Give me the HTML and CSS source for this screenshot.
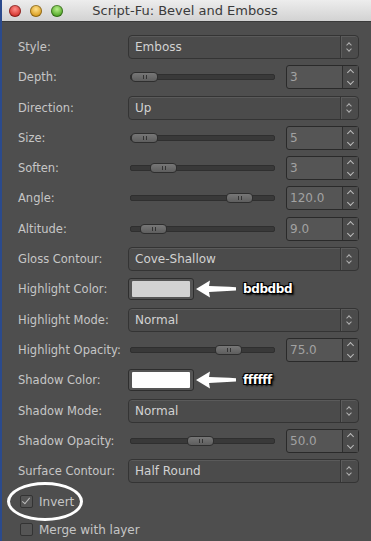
FILE: index.html
```html
<!DOCTYPE html>
<html lang="en">
<head>
    <meta charset="utf-8" />
    <meta name="viewport" content="width=device-width, initial-scale=1" />
    <title>Script-Fu: Bevel and Emboss</title>
    <link rel="stylesheet" href="styles.css">
</head>
<body>
    <div class="window">
        <div class="titlebar">
            <div class="lights">
                <span class="light red"></span>
                <span class="light yellow"></span>
                <span class="light green"></span>
            </div>
            <div class="title">Script-Fu: Bevel and Emboss</div>
        </div>

        <div class="content">
            <div class="form">
                <label>Style:</label>
                <div class="combo"><span>Emboss</span><i class="combo-arrows"></i></div>

                <label>Depth:</label>
                <div class="slider-row">
                    <div class="slider"><div class="track"></div><div class="handle" style="left: 3px"></div></div>
                    <div class="spin"><span>3</span><i class="spin-btn"></i></div>
                </div>

                <label>Direction:</label>
                <div class="combo"><span>Up</span><i class="combo-arrows"></i></div>

                <label>Size:</label>
                <div class="slider-row">
                    <div class="slider"><div class="track"></div><div class="handle" style="left: 3px"></div></div>
                    <div class="spin"><span>5</span><i class="spin-btn"></i></div>
                </div>

                <label>Soften:</label>
                <div class="slider-row">
                    <div class="slider"><div class="track"></div><div class="handle" style="left: 22px"></div></div>
                    <div class="spin"><span>3</span><i class="spin-btn"></i></div>
                </div>

                <label>Angle:</label>
                <div class="slider-row">
                    <div class="slider"><div class="track"></div><div class="handle" style="left: 98px"></div></div>
                    <div class="spin"><span>120.0</span><i class="spin-btn"></i></div>
                </div>

                <label>Altitude:</label>
                <div class="slider-row">
                    <div class="slider"><div class="track"></div><div class="handle" style="left: 12px"></div></div>
                    <div class="spin"><span>9.0</span><i class="spin-btn"></i></div>
                </div>

                <label>Gloss Contour:</label>
                <div class="combo"><span>Cove-Shallow</span><i class="combo-arrows"></i></div>

                <label>Highlight Color:</label>
                <div class="color-row">
                    <div class="swatch"><div class="swatch-fill" style="background: #d2d2d2"></div></div>
                    <svg class="pointer" width="42" height="20" viewBox="0 0 42 20">
                        <path d="M1 10 L15 1.5 L14 7 C23 7.2 32 7.4 41 8.3 L41 11.5 C32 12.2 23 12.6 14 13 L15 18.5 Z" fill="#fff"/>
                    </svg>
                    <span class="note">bdbdbd</span>
                </div>

                <label>Highlight Mode:</label>
                <div class="combo"><span>Normal</span><i class="combo-arrows"></i></div>

                <label>Highlight Opacity:</label>
                <div class="slider-row">
                    <div class="slider"><div class="track"></div><div class="handle" style="left: 87px"></div></div>
                    <div class="spin"><span>75.0</span><i class="spin-btn"></i></div>
                </div>

                <label>Shadow Color:</label>
                <div class="color-row">
                    <div class="swatch"><div class="swatch-fill" style="background: #ffffff"></div></div>
                    <svg class="pointer" width="42" height="20" viewBox="0 0 42 20">
                        <path d="M1 10 L15 1.5 L14 7 C23 7.2 32 7.4 41 8.3 L41 11.5 C32 12.2 23 12.6 14 13 L15 18.5 Z" fill="#fff"/>
                    </svg>
                    <span class="note">ffffff</span>
                </div>

                <label>Shadow Mode:</label>
                <div class="combo"><span>Normal</span><i class="combo-arrows"></i></div>

                <label>Shadow Opacity:</label>
                <div class="slider-row">
                    <div class="slider"><div class="track"></div><div class="handle" style="left: 59px"></div></div>
                    <div class="spin"><span>50.0</span><i class="spin-btn"></i></div>
                </div>

                <label>Surface Contour:</label>
                <div class="combo"><span>Half Round</span><i class="combo-arrows"></i></div>
            </div>

            <div class="checks">
                <div class="check-item circled">
                    <span class="box checked"></span>
                    <span>Invert</span>
                    <span class="ring"></span>
                </div>
                <div class="check-item">
                    <span class="box"></span>
                    <span>Merge with layer</span>
                </div>
            </div>
        </div>
    </div>
</body>
</html>
```

FILE: styles.css
```css
body {
    margin: 0;
    padding: 0;
    background-color: #2b4a8c;
    font-family: 'DejaVu Sans', Verdana, sans-serif;
    font-size: 11.5px;
    overflow: hidden;
}

.window {
    width: 369px;
    height: 541px;
    margin-left: 2px;
    background-color: #4e4e4e;
}

.titlebar {
    height: 22px;
    background: linear-gradient(#ededed, #d2d2d2);
    border-bottom: 1px solid #3a3a3a;
    box-sizing: border-box;
    display: flex;
    align-items: center;
}

.lights {
    display: flex;
    gap: 9px;
    padding-left: 7px;
}

.light {
    width: 12px;
    height: 12px;
    border-radius: 50%;
    box-shadow: inset 0 0 0 1px rgba(0, 0, 0, 0.35);
}

.light.red {
    background: radial-gradient(circle at 50% 35%, #ff8f8a, #d3302a 70%);
}

.light.yellow {
    background: radial-gradient(circle at 50% 35%, #ffe08a, #d89b1c 70%);
}

.light.green {
    background: radial-gradient(circle at 50% 35%, #b8f08a, #4ea524 70%);
}

.title {
    flex: 1;
    text-align: center;
    font-family: 'DejaVu Sans', sans-serif;
    font-size: 13px;
    color: #3a3a3a;
    padding-right: 64px;
}

.content {
    padding: 13px 12px 0 14px;
}

.form {
    display: grid;
    grid-template-columns: 112px 1fr;
    grid-auto-rows: 24px;
    row-gap: 6.3px;
}

.form label {
    color: #c6c6c6;
    display: flex;
    align-items: center;
    white-space: nowrap;
    padding-left: 2px;
}

.combo {
    background-color: #4b4b4b;
    border: 1px solid #343434;
    border-radius: 4px;
    box-shadow: inset 0 1px 0 #5a5a5a;
    display: flex;
    align-items: center;
    color: #d2d2d2;
    font-size: 12px;
}

.combo span {
    flex: 1;
    padding-left: 6px;
}

.combo-arrows {
    width: 17px;
    height: 100%;
    border-left: 1px solid #353535;
    box-shadow: inset 1px 0 0 #5c5c5c;
    position: relative;
}

.combo-arrows::before,
.combo-arrows::after {
    content: '';
    position: absolute;
    left: 6px;
    width: 3px;
    height: 3px;
    border-left: 1px solid #b0b0b0;
    border-top: 1px solid #b0b0b0;
    transform: rotate(45deg);
}

.combo-arrows::before {
    top: 7px;
}

.combo-arrows::after {
    top: 11px;
    transform: rotate(225deg);
}

.slider-row {
    display: flex;
    align-items: center;
    gap: 10px;
}

.slider {
    flex: 1;
    height: 24px;
    position: relative;
    padding: 0 1px 0 2px;
    display: flex;
    align-items: center;
}

.track {
    flex: 1;
    height: 4px;
    background-color: #393939;
    border: 1px solid #2f2f2f;
    border-radius: 2px;
}

.handle {
    position: absolute;
    top: 7px;
    width: 25px;
    height: 8px;
    background: linear-gradient(#777, #5e5e5e);
    border: 1px solid #2e2e2e;
    border-radius: 4px;
}

.handle::after {
    content: '';
    position: absolute;
    left: 11px;
    top: 2px;
    width: 1px;
    height: 4px;
    border-left: 1px solid #333;
    border-right: 1px solid #333;
    padding-right: 1px;
}

.spin {
    width: 71px;
    height: 22px;
    background-color: #555;
    border: 1px solid #2a2a2a;
    border-radius: 3px;
    display: flex;
    align-items: center;
    color: #a2a2a2;
    font-size: 12px;
}

.spin span {
    flex: 1;
    padding-left: 3px;
}

.spin-btn {
    width: 15px;
    height: 100%;
    background-color: #4c4c4c;
    border-left: 1px solid #2e2e2e;
    position: relative;
}

.spin-btn::before,
.spin-btn::after {
    content: '';
    position: absolute;
    left: 5px;
    width: 4px;
    height: 4px;
    border-left: 1px solid #bbb;
    border-top: 1px solid #bbb;
    transform: rotate(45deg);
}

.spin-btn::before {
    top: 4px;
}

.spin-btn::after {
    top: 13px;
    transform: rotate(225deg);
}

.color-row {
    display: flex;
    align-items: center;
}

.swatch {
    width: 58px;
    height: 16px;
    border: 1px solid #2e2e2e;
    border-radius: 3px;
    background-color: #555;
    padding: 2px 3px;
    display: flex;
}

.swatch-fill {
    flex: 1;
    border-radius: 1px;
}

.pointer {
    margin-left: 1px;
}

.note {
    margin-left: 6px;
    font-family: 'DejaVu Sans', sans-serif;
    font-weight: bold;
    font-size: 12px;
    letter-spacing: -0.4px;
    color: #fff;
    text-shadow: 0 0 2px #000, 1px 1px 0 #000, -1px -1px 0 #000, 1px -1px 0 #000, -1px 1px 0 #000, 2px 2px 2px #000;
}

.checks {
    padding: 9px 0 0 4px;
    display: flex;
    flex-direction: column;
    gap: 9px;
}

.check-item {
    display: flex;
    align-items: center;
    gap: 6px;
    color: #c6c6c6;
    font-size: 12px;
    height: 19px;
}

.circled {
    position: relative;
    width: fit-content;
}

.box {
    width: 11px;
    height: 11px;
    border: 1px solid #333;
    background-color: #555;
    border-radius: 2px;
    position: relative;
}

.box.checked::after {
    content: '';
    position: absolute;
    left: 3px;
    top: 0;
    width: 3px;
    height: 7px;
    border-right: 1.5px solid #bdbdbd;
    border-bottom: 1.5px solid #bdbdbd;
    transform: rotate(40deg);
}

.ring {
    position: absolute;
    left: -13px;
    top: -10px;
    width: 70px;
    height: 33px;
    border: 3px solid #fff;
    border-radius: 50%;
}
```
